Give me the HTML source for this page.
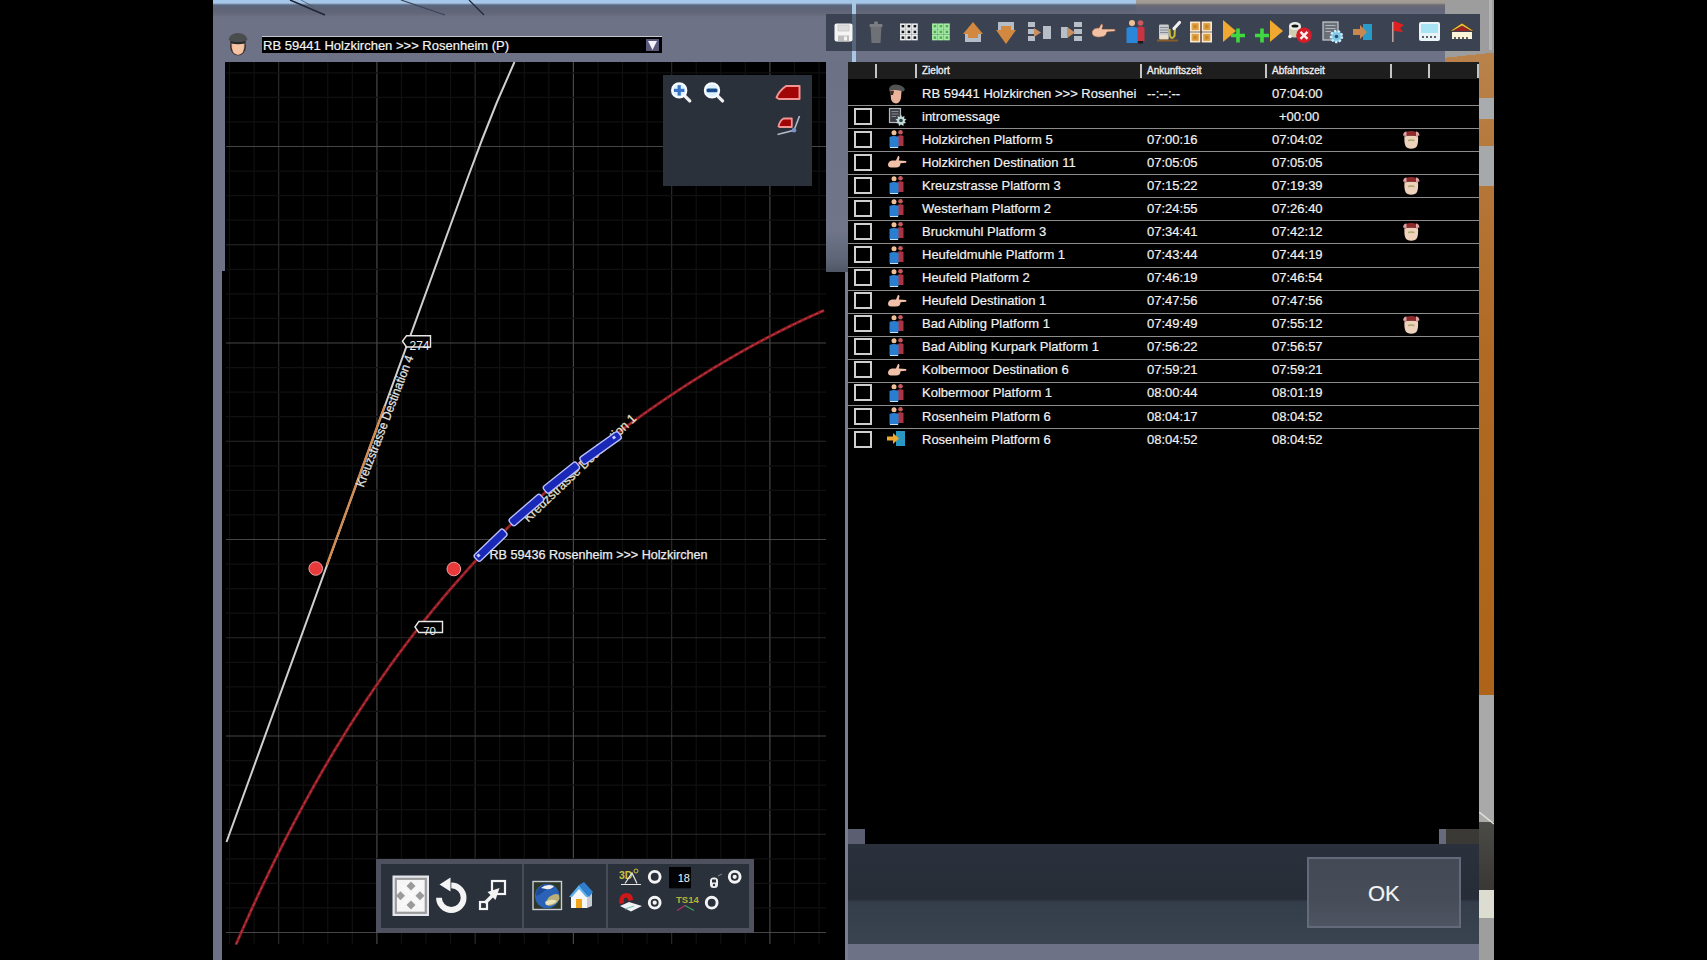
<!DOCTYPE html>
<html><head><meta charset="utf-8">
<style>
*{box-sizing:border-box}
html,body{margin:0;padding:0;background:#000;width:1707px;height:960px;overflow:hidden;font-family:"Liberation Sans",sans-serif}
.a{position:absolute}
.t{position:absolute;white-space:nowrap;color:#f2f2f2;font-size:13px;line-height:15px;-webkit-text-stroke:0.2px #f2f2f2}
.hs{position:absolute;top:64px;width:2px;height:14px;background:#c4c4c4}
.ht{position:absolute;top:65px;font-size:10px;line-height:11px;color:#ececec;white-space:nowrap;-webkit-text-stroke:0.35px #ececec}
.sep{position:absolute;left:848px;width:631px;height:1px;background:#8c8c8c}
.cb{position:absolute;left:854px;width:18px;height:17px;border:2px solid #cfcfcf}
</style></head>
<body>
<!-- scene -->
<div class="a" style="left:213px;top:0;width:1281px;height:960px;background:#6e7287"></div>
<div class="a" style="left:213px;top:0;width:1232px;height:17px;background:linear-gradient(#a2c6ea 0,#a8c8e8 3px,#5a6880 5px,#5e6376 9px,#646879 14px,#6e7287 17px)"></div>
<div class="a" style="left:1136px;top:0;width:309px;height:17px;background:linear-gradient(#a39d95 0,#a09a92 3px,#6c6c74 5px,#626678 9px,#666a7c 14px,#6e7287 17px)"></div>
<!-- right scenery strip -->
<div class="a" style="left:1445px;top:0;width:49px;height:53px;background:#9d9d9e"></div>
<div class="a" style="left:1489px;top:0;width:3px;height:53px;background:#b4b4b4"></div>
<div class="a" style="left:1479px;top:52px;width:15px;height:643px;background:linear-gradient(#b9834c 0,#b5773a 120px,#b06a24 300px,#ad6418 643px)"></div>
<div class="a" style="left:1445px;top:50px;width:49px;height:12px;background:linear-gradient(174deg,#9d9d9e 45%,#b8824a 45%)"></div>
<div class="a" style="left:1479px;top:98px;width:15px;height:21px;background:#a9acae"></div>
<div class="a" style="left:1479px;top:146px;width:15px;height:40px;background:#a6a8aa"></div>
<div class="a" style="left:1479px;top:695px;width:15px;height:127px;background:#a9a9a9"></div>
<div class="a" style="left:1479px;top:822px;width:15px;height:68px;background:linear-gradient(#4a4a46,#3a3834)"></div>
<svg class="a" style="left:1479px;top:812px" width="15" height="16"><path d="M0,0 L15,12" stroke="#e0e0d8" stroke-width="1.6"/></svg>
<div class="a" style="left:1479px;top:890px;width:15px;height:28px;background:#dcdcd0"></div>
<div class="a" style="left:1479px;top:918px;width:15px;height:42px;background:#9e9e9e"></div>
<!-- sky window strip -->
<div class="a" style="left:852px;top:0;width:4px;height:62px;background:#a9c8e6"></div>
<!-- wires -->
<svg class="a" style="left:213px;top:0" width="640" height="18"><g stroke="#1e2838" fill="none">
<path d="M77,0 L112,15" stroke-width="1.6"/><path d="M88,0 L101,7" stroke-width="0.8" stroke="#4a5a70"/>
<path d="M188,0 L232,15" stroke-width="1.2" stroke="#384458"/><path d="M256,0 L271,15" stroke-width="1.2"/>
</g></svg>
<!-- face icon -->
<svg class="a" style="left:226px;top:30px" width="24" height="27" viewBox="0 0 24 27">
  <ellipse cx="12" cy="16" rx="8" ry="9.5" fill="#3a2e28"/>
  <path d="M5.5,13 Q5,24 12,25 Q19,24 18.5,13 Z" fill="#f0b898"/>
  <path d="M7,14 Q12,12 17,14 L17,22 Q12,26 7,22 Z" fill="#f6c4a4"/>
  <path d="M2.5,10 Q4,3 12,3 Q20,3 21.5,10 Q18,12.5 12,12 Q6,12.5 2.5,10 Z" fill="#4a4d4e"/>
  <path d="M4,11 Q12,14 20,11 L19,13.5 Q12,15 5,13.5 Z" fill="#282828"/>
</svg>
<!-- dropdown -->
<div class="a" style="left:262px;top:36px;width:400px;height:1px;background:#c4c8d2"></div>
<div class="a" style="left:262px;top:37px;width:400px;height:16px;background:#000"></div>
<div class="t" style="left:263px;top:38px;font-size:13px;line-height:15px;color:#f4f4f4">RB 59441 Holzkirchen &gt;&gt;&gt; Rosenheim (P)</div>
<div class="a" style="left:646px;top:39px;width:13px;height:12px;background:#5b5a7c"></div>
<svg class="a" style="left:646px;top:39px" width="13" height="12"><path d="M2,2 L11,2 L6.5,11 Z" fill="#f4f2ff"/></svg>
<!-- map black -->
<div class="a" style="left:222px;top:62px;width:623px;height:898px;background:#000;clip-path:polygon(3px 0,100% 0,100% 100%,0 100%,0 209px,3px 209px)"></div>
<div class="a" style="left:826px;top:62px;width:22px;height:210px;background:linear-gradient(#6c7186 0,#70758a 80%,#5c6474 95%,#4e5664 100%)"></div>
<div class="a" style="left:845px;top:272px;width:3px;height:688px;background:#7a7e90"></div>
<svg class="a" style="left:0;top:0" width="1707" height="960" viewBox="0 0 1707 960">
<g>
<line x1="229.52" y1="62" x2="229.52" y2="944" stroke="#101010" stroke-width="1.2"/>
<line x1="254.09" y1="62" x2="254.09" y2="944" stroke="#101010" stroke-width="1.2"/>
<line x1="278.65" y1="62" x2="278.65" y2="944" stroke="#2a2a2a" stroke-width="1.2"/>
<line x1="303.21" y1="62" x2="303.21" y2="944" stroke="#101010" stroke-width="1.2"/>
<line x1="327.77" y1="62" x2="327.77" y2="944" stroke="#101010" stroke-width="1.2"/>
<line x1="352.34" y1="62" x2="352.34" y2="944" stroke="#101010" stroke-width="1.2"/>
<line x1="376.9" y1="62" x2="376.9" y2="944" stroke="#464646" stroke-width="1.2"/>
<line x1="401.46" y1="62" x2="401.46" y2="944" stroke="#101010" stroke-width="1.2"/>
<line x1="426.02" y1="62" x2="426.02" y2="944" stroke="#101010" stroke-width="1.2"/>
<line x1="450.59" y1="62" x2="450.59" y2="944" stroke="#101010" stroke-width="1.2"/>
<line x1="475.15" y1="62" x2="475.15" y2="944" stroke="#2a2a2a" stroke-width="1.2"/>
<line x1="499.71" y1="62" x2="499.71" y2="944" stroke="#101010" stroke-width="1.2"/>
<line x1="524.27" y1="62" x2="524.27" y2="944" stroke="#101010" stroke-width="1.2"/>
<line x1="548.84" y1="62" x2="548.84" y2="944" stroke="#101010" stroke-width="1.2"/>
<line x1="573.4" y1="62" x2="573.4" y2="944" stroke="#464646" stroke-width="1.2"/>
<line x1="597.96" y1="62" x2="597.96" y2="944" stroke="#101010" stroke-width="1.2"/>
<line x1="622.52" y1="62" x2="622.52" y2="944" stroke="#101010" stroke-width="1.2"/>
<line x1="647.09" y1="62" x2="647.09" y2="944" stroke="#101010" stroke-width="1.2"/>
<line x1="671.65" y1="62" x2="671.65" y2="944" stroke="#2a2a2a" stroke-width="1.2"/>
<line x1="696.21" y1="62" x2="696.21" y2="944" stroke="#101010" stroke-width="1.2"/>
<line x1="720.77" y1="62" x2="720.77" y2="944" stroke="#101010" stroke-width="1.2"/>
<line x1="745.34" y1="62" x2="745.34" y2="944" stroke="#101010" stroke-width="1.2"/>
<line x1="769.9" y1="62" x2="769.9" y2="944" stroke="#464646" stroke-width="1.2"/>
<line x1="794.46" y1="62" x2="794.46" y2="944" stroke="#101010" stroke-width="1.2"/>
<line x1="819.02" y1="62" x2="819.02" y2="944" stroke="#101010" stroke-width="1.2"/>
<line x1="226" y1="72.81" x2="826" y2="72.81" stroke="#101010" stroke-width="1.2"/>
<line x1="226" y1="97.38" x2="826" y2="97.38" stroke="#101010" stroke-width="1.2"/>
<line x1="226" y1="121.94" x2="826" y2="121.94" stroke="#101010" stroke-width="1.2"/>
<line x1="226" y1="146.5" x2="826" y2="146.5" stroke="#464646" stroke-width="1.2"/>
<line x1="226" y1="171.06" x2="826" y2="171.06" stroke="#101010" stroke-width="1.2"/>
<line x1="226" y1="195.62" x2="826" y2="195.62" stroke="#101010" stroke-width="1.2"/>
<line x1="226" y1="220.19" x2="826" y2="220.19" stroke="#101010" stroke-width="1.2"/>
<line x1="226" y1="244.75" x2="826" y2="244.75" stroke="#2a2a2a" stroke-width="1.2"/>
<line x1="226" y1="269.31" x2="826" y2="269.31" stroke="#101010" stroke-width="1.2"/>
<line x1="226" y1="293.88" x2="826" y2="293.88" stroke="#101010" stroke-width="1.2"/>
<line x1="226" y1="318.44" x2="826" y2="318.44" stroke="#101010" stroke-width="1.2"/>
<line x1="226" y1="343" x2="826" y2="343" stroke="#464646" stroke-width="1.2"/>
<line x1="226" y1="367.56" x2="826" y2="367.56" stroke="#101010" stroke-width="1.2"/>
<line x1="226" y1="392.12" x2="826" y2="392.12" stroke="#101010" stroke-width="1.2"/>
<line x1="226" y1="416.69" x2="826" y2="416.69" stroke="#101010" stroke-width="1.2"/>
<line x1="226" y1="441.25" x2="826" y2="441.25" stroke="#2a2a2a" stroke-width="1.2"/>
<line x1="226" y1="465.81" x2="826" y2="465.81" stroke="#101010" stroke-width="1.2"/>
<line x1="226" y1="490.38" x2="826" y2="490.38" stroke="#101010" stroke-width="1.2"/>
<line x1="226" y1="514.94" x2="826" y2="514.94" stroke="#101010" stroke-width="1.2"/>
<line x1="226" y1="539.5" x2="826" y2="539.5" stroke="#464646" stroke-width="1.2"/>
<line x1="226" y1="564.06" x2="826" y2="564.06" stroke="#101010" stroke-width="1.2"/>
<line x1="226" y1="588.62" x2="826" y2="588.62" stroke="#101010" stroke-width="1.2"/>
<line x1="226" y1="613.19" x2="826" y2="613.19" stroke="#101010" stroke-width="1.2"/>
<line x1="226" y1="637.75" x2="826" y2="637.75" stroke="#2a2a2a" stroke-width="1.2"/>
<line x1="226" y1="662.31" x2="826" y2="662.31" stroke="#101010" stroke-width="1.2"/>
<line x1="226" y1="686.88" x2="826" y2="686.88" stroke="#101010" stroke-width="1.2"/>
<line x1="226" y1="711.44" x2="826" y2="711.44" stroke="#101010" stroke-width="1.2"/>
<line x1="226" y1="736" x2="826" y2="736" stroke="#464646" stroke-width="1.2"/>
<line x1="226" y1="760.56" x2="826" y2="760.56" stroke="#101010" stroke-width="1.2"/>
<line x1="226" y1="785.12" x2="826" y2="785.12" stroke="#101010" stroke-width="1.2"/>
<line x1="226" y1="809.69" x2="826" y2="809.69" stroke="#101010" stroke-width="1.2"/>
<line x1="226" y1="834.25" x2="826" y2="834.25" stroke="#2a2a2a" stroke-width="1.2"/>
<line x1="226" y1="858.81" x2="826" y2="858.81" stroke="#101010" stroke-width="1.2"/>
<line x1="226" y1="883.38" x2="826" y2="883.38" stroke="#101010" stroke-width="1.2"/>
<line x1="226" y1="907.94" x2="826" y2="907.94" stroke="#101010" stroke-width="1.2"/>
<line x1="226" y1="932.5" x2="826" y2="932.5" stroke="#464646" stroke-width="1.2"/>
</g>
<!-- white track -->
<path d="M226.5,842 L468,177 Q482.2,138.2 497,102 L514.5,62" fill="none" stroke="#cfcfcf" stroke-width="2"/>
<line x1="384.7" y1="406" x2="326.8" y2="565" stroke="#d48a4c" stroke-width="2.2"/>
<!-- red track -->
<path d="M236,944.49 L238,939.88 L240,935.3 L242,930.75 L244,926.24 L246,921.75 L248,917.29 L250,912.87 L252,908.47 L254,904.1 L256,899.76 L258,895.46 L260,891.18 L262,886.92 L264,882.7 L266,878.51 L268,874.34 L270,870.2 L272,866.09 L274,862.01 L276,857.95 L278,853.92 L280,849.92 L282,845.94 L284,841.99 L286,838.07 L288,834.17 L290,830.3 L292,826.46 L294,822.64 L296,818.85 L298,815.08 L300,811.33 L302,807.62 L304,803.92 L306,800.25 L308,796.61 L310,792.98 L312,789.39 L314,785.81 L316,782.26 L318,778.74 L320,775.23 L322,771.75 L324,768.3 L326,764.86 L328,761.45 L330,758.06 L332,754.69 L334,751.35 L336,748.02 L338,744.72 L340,741.44 L342,738.18 L344,734.94 L346,731.72 L348,728.53 L350,725.35 L352,722.2 L354,719.06 L356,715.95 L358,712.85 L360,709.78 L362,706.72 L364,703.69 L366,700.67 L368,697.68 L370,694.7 L372,691.74 L374,688.8 L376,685.88 L378,682.98 L380,680.09 L382,677.23 L384,674.38 L386,671.55 L388,668.74 L390,665.94 L392,663.17 L394,660.41 L396,657.67 L398,654.94 L400,652.23 L402,649.54 L404,646.86 L406,644.21 L408,641.56 L410,638.94 L412,636.33 L414,633.73 L416,631.16 L418,628.59 L420,626.05 L422,623.52 L424,621 L426,618.5 L428,616.01 L430,613.54 L432,611.09 L434,608.64 L436,606.22 L438,603.81 L440,601.41 L442,599.02 L444,596.65 L446,594.3 L448,591.95 L450,589.63 L452,587.31 L454,585.01 L456,582.72 L458,580.45 L460,578.19 L462,575.94 L464,573.7 L466,571.48 L468,569.27 L470,567.07 L472,564.88 L474,562.71 L476,560.55 L478,558.4 L480,556.26 L482,554.14 L484,552.03 L486,549.93 L488,547.84 L490,545.76 L492,543.69 L494,541.64 L496,539.59 L498,537.56 L500,535.54 L502,533.53 L504,531.53 L506,529.54 L508,527.56 L510,525.59 L512,523.63 L514,521.68 L516,519.75 L518,517.82 L520,515.9 L522,514 L524,512.1 L526,510.21 L528,508.34 L530,506.47 L532,504.61 L534,502.76 L536,500.92 L538,499.09 L540,497.27 L542,495.46 L544,493.66 L546,491.87 L548,490.08 L550,488.31 L552,486.54 L554,484.79 L556,483.04 L558,481.3 L560,479.56 L562,477.84 L564,476.13 L566,474.42 L568,472.72 L570,471.03 L572,469.35 L574,467.68 L576,466.01 L578,464.36 L580,462.71 L582,461.06 L584,459.43 L586,457.8 L588,456.19 L590,454.57 L592,452.97 L594,451.37 L596,449.79 L598,448.21 L600,446.63 L602,445.07 L604,443.51 L606,441.95 L608,440.41 L610,438.87 L612,437.34 L614,435.82 L616,434.3 L618,432.79 L620,431.29 L622,429.79 L624,428.3 L626,426.82 L628,425.34 L630,423.87 L632,422.41 L634,420.96 L636,419.51 L638,418.06 L640,416.63 L642,415.2 L644,413.77 L646,412.36 L648,410.95 L650,409.54 L652,408.14 L654,406.75 L656,405.37 L658,403.99 L660,402.61 L662,401.25 L664,399.88 L666,398.53 L668,397.18 L670,395.84 L672,394.5 L674,393.17 L676,391.85 L678,390.53 L680,389.22 L682,387.91 L684,386.61 L686,385.31 L688,384.03 L690,382.74 L692,381.47 L694,380.19 L696,378.93 L698,377.67 L700,376.42 L702,375.17 L704,373.93 L706,372.69 L708,371.46 L710,370.24 L712,369.02 L714,367.81 L716,366.6 L718,365.4 L720,364.2 L722,363.02 L724,361.83 L726,360.66 L728,359.48 L730,358.32 L732,357.16 L734,356 L736,354.86 L738,353.71 L740,352.58 L742,351.45 L744,350.32 L746,349.2 L748,348.09 L750,346.99 L752,345.88 L754,344.79 L756,343.7 L758,342.62 L760,341.54 L762,340.47 L764,339.41 L766,338.35 L768,337.3 L770,336.25 L772,335.21 L774,334.18 L776,333.15 L778,332.13 L780,331.11 L782,330.1 L784,329.1 L786,328.11 L788,327.12 L790,326.13 L792,325.16 L794,324.19 L796,323.22 L798,322.27 L800,321.32 L802,320.37 L804,319.44 L806,318.5 L808,317.58 L810,316.66 L812,315.75 L814,314.85 L816,313.95 L818,313.07 L820,312.18 L822,311.31 L824,310.44" fill="none" stroke="#8e1a22" stroke-width="2.9"/>
<path d="M236,944.49 L238,939.88 L240,935.3 L242,930.75 L244,926.24 L246,921.75 L248,917.29 L250,912.87 L252,908.47 L254,904.1 L256,899.76 L258,895.46 L260,891.18 L262,886.92 L264,882.7 L266,878.51 L268,874.34 L270,870.2 L272,866.09 L274,862.01 L276,857.95 L278,853.92 L280,849.92 L282,845.94 L284,841.99 L286,838.07 L288,834.17 L290,830.3 L292,826.46 L294,822.64 L296,818.85 L298,815.08 L300,811.33 L302,807.62 L304,803.92 L306,800.25 L308,796.61 L310,792.98 L312,789.39 L314,785.81 L316,782.26 L318,778.74 L320,775.23 L322,771.75 L324,768.3 L326,764.86 L328,761.45 L330,758.06 L332,754.69 L334,751.35 L336,748.02 L338,744.72 L340,741.44 L342,738.18 L344,734.94 L346,731.72 L348,728.53 L350,725.35 L352,722.2 L354,719.06 L356,715.95 L358,712.85 L360,709.78 L362,706.72 L364,703.69 L366,700.67 L368,697.68 L370,694.7 L372,691.74 L374,688.8 L376,685.88 L378,682.98 L380,680.09 L382,677.23 L384,674.38 L386,671.55 L388,668.74 L390,665.94 L392,663.17 L394,660.41 L396,657.67 L398,654.94 L400,652.23 L402,649.54 L404,646.86 L406,644.21 L408,641.56 L410,638.94 L412,636.33 L414,633.73 L416,631.16 L418,628.59 L420,626.05 L422,623.52 L424,621 L426,618.5 L428,616.01 L430,613.54 L432,611.09 L434,608.64 L436,606.22 L438,603.81 L440,601.41 L442,599.02 L444,596.65 L446,594.3 L448,591.95 L450,589.63 L452,587.31 L454,585.01 L456,582.72 L458,580.45 L460,578.19 L462,575.94 L464,573.7 L466,571.48 L468,569.27 L470,567.07 L472,564.88 L474,562.71 L476,560.55 L478,558.4 L480,556.26 L482,554.14 L484,552.03 L486,549.93 L488,547.84 L490,545.76 L492,543.69 L494,541.64 L496,539.59 L498,537.56 L500,535.54 L502,533.53 L504,531.53 L506,529.54 L508,527.56 L510,525.59 L512,523.63 L514,521.68 L516,519.75 L518,517.82 L520,515.9 L522,514 L524,512.1 L526,510.21 L528,508.34 L530,506.47 L532,504.61 L534,502.76 L536,500.92 L538,499.09 L540,497.27 L542,495.46 L544,493.66 L546,491.87 L548,490.08 L550,488.31 L552,486.54 L554,484.79 L556,483.04 L558,481.3 L560,479.56 L562,477.84 L564,476.13 L566,474.42 L568,472.72 L570,471.03 L572,469.35 L574,467.68 L576,466.01 L578,464.36 L580,462.71 L582,461.06 L584,459.43 L586,457.8 L588,456.19 L590,454.57 L592,452.97 L594,451.37 L596,449.79 L598,448.21 L600,446.63 L602,445.07 L604,443.51 L606,441.95 L608,440.41 L610,438.87 L612,437.34 L614,435.82 L616,434.3 L618,432.79 L620,431.29 L622,429.79 L624,428.3 L626,426.82 L628,425.34 L630,423.87 L632,422.41 L634,420.96 L636,419.51 L638,418.06 L640,416.63 L642,415.2 L644,413.77 L646,412.36 L648,410.95 L650,409.54 L652,408.14 L654,406.75 L656,405.37 L658,403.99 L660,402.61 L662,401.25 L664,399.88 L666,398.53 L668,397.18 L670,395.84 L672,394.5 L674,393.17 L676,391.85 L678,390.53 L680,389.22 L682,387.91 L684,386.61 L686,385.31 L688,384.03 L690,382.74 L692,381.47 L694,380.19 L696,378.93 L698,377.67 L700,376.42 L702,375.17 L704,373.93 L706,372.69 L708,371.46 L710,370.24 L712,369.02 L714,367.81 L716,366.6 L718,365.4 L720,364.2 L722,363.02 L724,361.83 L726,360.66 L728,359.48 L730,358.32 L732,357.16 L734,356 L736,354.86 L738,353.71 L740,352.58 L742,351.45 L744,350.32 L746,349.2 L748,348.09 L750,346.99 L752,345.88 L754,344.79 L756,343.7 L758,342.62 L760,341.54 L762,340.47 L764,339.41 L766,338.35 L768,337.3 L770,336.25 L772,335.21 L774,334.18 L776,333.15 L778,332.13 L780,331.11 L782,330.1 L784,329.1 L786,328.11 L788,327.12 L790,326.13 L792,325.16 L794,324.19 L796,323.22 L798,322.27 L800,321.32 L802,320.37 L804,319.44 L806,318.5 L808,317.58 L810,316.66 L812,315.75 L814,314.85 L816,313.95 L818,313.07 L820,312.18 L822,311.31 L824,310.44" fill="none" stroke="#c84450" stroke-width="0.9" stroke-dasharray="4 2"/>
<!-- texts along tracks -->
<text x="0" y="0" transform="translate(363.5,488) rotate(-69)" font-family="Liberation Sans" font-size="12.5" fill="#e4e4e4" stroke="#e4e4e4" stroke-width="0.25" textLength="140" lengthAdjust="spacingAndGlyphs">Kreuzstrasse Destination 4</text>
<text x="0" y="0" transform="translate(528.3,522.8) rotate(-43.5)" font-family="Liberation Sans" font-size="13" fill="#e6e0c8" stroke="#e6e0c8" stroke-width="0.25" textLength="150" lengthAdjust="spacingAndGlyphs">Kreuzstrasse Destination 1</text>
<!-- train cars -->
<g fill="#1a28b8" stroke="#b8c0ff" stroke-width="1.4">
  <rect x="-20" y="-4.3" width="40" height="8.6" rx="2.5" transform="translate(490.6,545.2) rotate(-44)"/>
  <rect x="-20.5" y="-4.3" width="41" height="8.6" rx="2.5" transform="translate(526.4,510) rotate(-41)"/>
  <rect x="-21" y="-4.3" width="42" height="8.6" rx="2.5" transform="translate(561.4,477.6) rotate(-38.7)"/>
  <rect x="-23.5" y="-4.3" width="47" height="8.6" rx="2.5" transform="translate(600.6,448) rotate(-35.5)"/>
</g>
<g fill="#c8ccff">
  <rect x="-1.5" y="-1.5" width="3" height="3" transform="translate(478.5,555.5) rotate(-44)"/>
  <rect x="-1.5" y="-1.5" width="3" height="3" transform="translate(614,437.5) rotate(-35)"/>
</g>
<!-- train label -->
<text x="489.5" y="558.5" font-family="Liberation Sans" font-size="12" fill="#ececec" stroke="#ececec" stroke-width="0.25" textLength="218" lengthAdjust="spacingAndGlyphs">RB 59436 Rosenheim &gt;&gt;&gt; Holzkirchen</text>
<!-- red dots -->
<circle cx="315.7" cy="568.5" r="6.8" fill="#e83a3a" stroke="#f2a2a2" stroke-width="1"/>
<circle cx="453.8" cy="569" r="6.8" fill="#e83a3a" stroke="#f2a2a2" stroke-width="1"/>
<!-- tags -->
<path d="M402.5,341.2 L406.5,335.8 L430.5,335.8 L430.5,347 L406.5,347 Z" fill="#000" stroke="#e8e8e8" stroke-width="1.4"/>
<text x="409.5" y="349.5" font-family="Liberation Sans" font-size="12" fill="#f0f0f0">274</text>
<path d="M415,627 L418.8,621.5 L442.5,621.5 L442.5,632.5 L418.8,632.5 Z" fill="#000" stroke="#e8e8e8" stroke-width="1.4"/>
<text x="423.2" y="634.5" font-family="Liberation Sans" font-size="11.5" fill="#f0f0f0">70</text>
</svg>
<!-- map overlay panel -->
<div class="a" style="left:663px;top:75px;width:149px;height:111px;background:#2a313b"></div>
<svg class="a" style="left:663px;top:75px" width="149" height="111" viewBox="0 0 149 111">
  <!-- zoom in -->
  <g transform="translate(16.2,15.4)">
    <line x1="5" y1="5" x2="10.5" y2="10.5" stroke="#f0f0f0" stroke-width="3.4" stroke-linecap="round"/>
    <circle cx="0" cy="0" r="7.2" fill="#dcf2fc" stroke="#f8fcff" stroke-width="2"/>
    <rect x="-5.2" y="-1.6" width="10.4" height="3.2" fill="#3a74c8"/>
    <rect x="-1.6" y="-5.2" width="3.2" height="10.4" fill="#3a74c8"/>
  </g>
  <!-- zoom out -->
  <g transform="translate(49,15.4)">
    <line x1="5" y1="5" x2="10.5" y2="10.5" stroke="#f0f0f0" stroke-width="3.4" stroke-linecap="round"/>
    <circle cx="0" cy="0" r="7.2" fill="#dcf2fc" stroke="#f8fcff" stroke-width="2"/>
    <rect x="-5.5" y="-1.8" width="11" height="3.6" rx="1.5" fill="#1c4c8c"/>
  </g>
  <!-- red train shape -->
  <path d="M113.5,22.5 Q116,16 123,11 L136.5,11 L136.5,24 L116,24 Z" fill="#a00606" stroke="#f09494" stroke-width="2" stroke-linejoin="round"/>
  <path d="M115.5,51.5 Q116.5,46 120.5,43.5 L128.8,43.5 L128.8,52 L116.5,52 Z" fill="#a00606" stroke="#f09494" stroke-width="1.8" stroke-linejoin="round"/>
  <path d="M114.5,59.5 L131,55.3 L136.5,41" fill="none" stroke="#b0b8c8" stroke-width="1.6"/>
  <circle cx="131" cy="55.3" r="2.3" fill="#7a94c8"/>
</svg>
<!-- bottom toolbar -->
<div class="a" style="left:376px;top:859px;width:378px;height:74px;background:#4f525e"></div>
<div class="a" style="left:381px;top:864px;width:368px;height:64px;background:#2a313b"></div>
<div class="a" style="left:522px;top:864px;width:2px;height:64px;background:#474c58"></div>
<div class="a" style="left:606px;top:864px;width:2px;height:64px;background:#474c58"></div>
<svg class="a" style="left:376px;top:859px" width="378" height="74" viewBox="0 0 378 74">
  <!-- fit frame -->
  <rect x="17.5" y="17.5" width="34.5" height="38.5" fill="#f6f6f6" stroke="#e4e8ee" stroke-width="2"/>
  <rect x="19.8" y="19.8" width="30" height="34" fill="none" stroke="#9c9c9c" stroke-width="2.2"/>
  <path d="M25,25 L45,48 M45,25 L25,48" stroke="#ffffff" stroke-width="1"/>
  <g fill="#9a9a9a">
    <rect x="-3.2" y="-3.2" width="6.4" height="6.4" transform="translate(35,27) rotate(45)"/>
    <rect x="-3.2" y="-3.2" width="6.4" height="6.4" transform="translate(35,46) rotate(45)"/>
    <rect x="-3.2" y="-3.2" width="6.4" height="6.4" transform="translate(24.5,36.7) rotate(45)"/>
    <rect x="-3.2" y="-3.2" width="6.4" height="6.4" transform="translate(44,36.7) rotate(45)"/>
  </g>
  <!-- rotate -->
  <path d="M63,38.7 A12.3,12.3 0 1 0 75.3,26.4" fill="none" stroke="#f4f4f4" stroke-width="5.8"/>
  <path d="M63.5,25.5 L74.5,18.5 L74.5,32.5 Z" fill="#f4f4f4"/>
  <!-- expand -->
  <rect x="116" y="22" width="13" height="13" fill="#2a313b" stroke="#f4f4f4" stroke-width="2.2"/>
  <rect x="104" y="43" width="7" height="7" fill="#2a313b" stroke="#f4f4f4" stroke-width="2.2"/>
  <path d="M109,44 L117,36" stroke="#f4f4f4" stroke-width="3.4"/>
  <path d="M123.5,29 L111.5,33 L119.5,41 Z" fill="#f4f4f4"/>
  <!-- globe -->
  <rect x="157" y="22.5" width="28.5" height="28" fill="#2e3628" stroke="#c8ccd4" stroke-width="1.4"/>
  <circle cx="171.2" cy="37" r="12.3" fill="#2a62b8"/>
  <path d="M160,37 Q160,27 171,25 Q176,26 177,30 Q171,29 168,32 Q164,36 160,37 Z" fill="#1c4a98"/>
  <path d="M165,29 Q170,24.5 178,27 Q175,31 170,30 Z" fill="#f0f0f0"/>
  <path d="M173,38 Q180,33 183,36 L183.5,40 Q180,47 172,47 Q168,44 173,38 Z" fill="#b8b078"/>
  <path d="M169,43 Q175,39 181,42 Q177,46 170,46 Z" fill="#e8e4b8"/>
  <!-- house -->
  <path d="M195,37 L203,28 L211,37 L211,49 L195,49 Z" fill="#f6f6f6"/>
  <path d="M211,37 L216,33 L216,47 L211,49 Z" fill="#c8ccd0"/>
  <path d="M193,38 L203,26 L213,38 L210,38 L203,30 L196,38 Z" fill="#5ab0ee"/>
  <path d="M203,26 L208,23 L217,33 L213,38 Z" fill="#2f7fd0"/>
  <rect x="200" y="40" width="6" height="9" fill="#f0a418"/>
  <!-- 3D -->
  <text x="243" y="19.5" font-family="Liberation Sans" font-size="10.5" fill="#c8c040" font-weight="bold">3D</text>
  <circle cx="260" cy="12" r="2" fill="none" stroke="#c8c040" stroke-width="1"/>
  <path d="M249,24.5 L256,14 L261,24.5 M245,25.5 L265,25.5" stroke="#e8e8e8" stroke-width="1.2" fill="none"/>
  <!-- radios -->
  <g fill="none" stroke="#f4f4f4" stroke-width="2.9">
    <circle cx="278.7" cy="17.8" r="5.4"/>
    <circle cx="278.7" cy="43.7" r="5.4"/>
    <circle cx="358.7" cy="17.8" r="5.4"/>
    <circle cx="335.7" cy="43.7" r="5.4"/>
  </g>
  <circle cx="278.7" cy="43.7" r="2.1" fill="#f4f4f4"/>
  <circle cx="358.7" cy="17.8" r="2.1" fill="#f4f4f4"/>
  <!-- 18 box -->
  <rect x="293" y="8" width="22" height="21.3" fill="#030305"/>
  <text x="314" y="22.5" font-family="Liberation Sans" font-size="11" fill="#f4f4f4" text-anchor="end">18</text>
  <!-- lock -->
  <rect x="334" y="18.5" width="8" height="10.5" rx="3.5" fill="#f0f0f0"/>
  <rect x="336" y="20.5" width="4" height="3" fill="#2a313b"/>
  <circle cx="338" cy="26" r="1.2" fill="#2a313b"/>
  <path d="M342,17 L346,15" stroke="#a0a4a8" stroke-width="0.8"/>
  <!-- magnet -->
  <path d="M243.5,45 Q242,35 250,34 Q257,34 257,41 L252.5,42 Q252,38 249.5,38.5 Q247,39 248,44 Z" fill="#d01818"/>
  <path d="M244,47 L253,43 L266,47 L255,52.5 Z" fill="#f2f2f6"/>
  <path d="M249,50 L258,47" stroke="#7ac8b8" stroke-width="1.2"/>
  <!-- TS14 -->
  <text x="300" y="44" font-family="Liberation Sans" font-size="9.5" font-weight="bold" fill="#b8b038">TS14</text>
  <path d="M301,51.5 L309,46.5" stroke="#b03070" stroke-width="1.2"/>
  <path d="M309,46.5 L318,51.5" stroke="#38a050" stroke-width="1.4"/>
</svg>
<!-- toolbar -->
<div class="a" style="left:826px;top:14px;width:654px;height:37px;background:#3b4352"></div>
<div class="a" style="left:852px;top:14px;width:4px;height:37px;background:#56667a"></div>
<svg class="a" style="left:826px;top:14px" width="654" height="37" viewBox="826 14 654 37">
  <!-- floppy 843 -->
  <rect x="834.5" y="23.5" width="18" height="18" rx="2" fill="#f4f4f4"/>
  <rect x="838" y="25" width="11" height="6" fill="#dcdcdc" stroke="#c8c8c8" stroke-width="0.8"/>
  <rect x="838" y="35.5" width="11" height="6" fill="#bdbdbd"/>
  <rect x="844" y="36.5" width="3" height="4" fill="#f4f4f4"/>
  <!-- trash 876 -->
  <path d="M870.5,26 L881.5,26 L880.5,43 L871.5,43 Z" fill="#6e7276"/>
  <rect x="869.5" y="24" width="13" height="3" rx="1" fill="#7a7e82"/>
  <rect x="874" y="21.5" width="4" height="3" rx="1" fill="#7a7e82"/>
  <!-- grids 908 / 941 -->
  <g fill="#151a20" stroke="#f2f2f2" stroke-width="1.5"><rect x="900.8" y="24.2" width="4.2" height="4" /><rect x="900.8" y="29.9" width="4.2" height="4" /><rect x="900.8" y="35.6" width="4.2" height="4" /><rect x="906.8" y="24.2" width="4.2" height="4" /><rect x="906.8" y="29.9" width="4.2" height="4" /><rect x="906.8" y="35.6" width="4.2" height="4" /><rect x="912.8" y="24.2" width="4.2" height="4" /><rect x="912.8" y="29.9" width="4.2" height="4" /><rect x="912.8" y="35.6" width="4.2" height="4" /></g>
  <g fill="#58a858" stroke="#a8f0a8" stroke-width="1.5"><rect x="932.8" y="24.2" width="4.2" height="4" /><rect x="932.8" y="29.9" width="4.2" height="4" /><rect x="932.8" y="35.6" width="4.2" height="4" /><rect x="938.8" y="24.2" width="4.2" height="4" /><rect x="938.8" y="29.9" width="4.2" height="4" /><rect x="938.8" y="35.6" width="4.2" height="4" /><rect x="944.8" y="24.2" width="4.2" height="4" /><rect x="944.8" y="29.9" width="4.2" height="4" /><rect x="944.8" y="35.6" width="4.2" height="4" /></g>
  <!-- up arrow 973 -->
  <rect x="965" y="33" width="16" height="9" fill="#b4bcc8"/>
  <path d="M963,34 L973,22 L983,34 L978,34 L978,38 L968,38 L968,34 Z" fill="#d2883e"/>
  <!-- down arrow 1006 -->
  <rect x="998" y="22" width="16" height="8" fill="#b4bcc8"/>
  <path d="M996,30 L1006,44 L1016,30 L1011,30 L1011,26 L1001,26 L1001,30 Z" fill="#d2883e"/>
  <!-- merge 1038 -->
  <g fill="#b8bec8"><rect x="1028" y="22" width="7" height="5"/><rect x="1028" y="29" width="7" height="5"/><rect x="1028" y="36" width="7" height="5"/><rect x="1043" y="26" width="8" height="13"/></g>
  <path d="M1034,28 L1041,32.5 L1034,37 Z" fill="#c89060"/>
  <!-- split 1071 -->
  <g fill="#b8bec8"><rect x="1074" y="22" width="8" height="5"/><rect x="1074" y="29" width="8" height="5"/><rect x="1074" y="36" width="8" height="5"/><rect x="1061" y="27" width="7" height="11"/></g>
  <path d="M1067,27 L1075,32.5 L1067,38 Z" fill="#c89060"/>
  <!-- hand 1103 -->
  <path d="M1092,31 Q1095,27 1099,28 L1101,24 Q1103,23 1103,26 L1102,29 L1115,29 Q1116,31 1114,31.5 L1107,32 Q1106,37 1101,37 Q1094,38 1092,34 Z" fill="#f4c0a4" stroke="#5a3a30" stroke-width="0.6"/>
  <!-- people 1136 -->
  <circle cx="1140.5" cy="23" r="2.8" fill="#c85a60"/>
  <path d="M1136.5,27.5 Q1140.5,25.5 1144.5,27.5 L1144.5,41 L1137,41 Z" fill="#c83440"/>
  <rect x="1138" y="41" width="5" height="2.5" fill="#1a1a1a"/>
  <circle cx="1132" cy="23" r="3" fill="#f0c098"/>
  <path d="M1126.5,28 Q1132,25.5 1137.5,28 L1137.5,43 L1126.5,43 Z" fill="#2a86d8"/>
  <!-- pump 1168 -->
  <rect x="1159" y="24.5" width="9.8" height="15" rx="1" fill="#c8ccd0"/>
  <path d="M1160,27.5 H1168 M1160,30 H1168 M1160,32.5 H1168" stroke="#80848a" stroke-width="0.9"/>
  <rect x="1160" y="35" width="8" height="4.5" fill="#e8e0cc"/>
  <path d="M1169.5,29 L1170,36 Q1172,40 1174.5,36 L1175,28" stroke="#c8b838" stroke-width="2" fill="none"/>
  <path d="M1174,28.5 L1179.5,22.5" stroke="#f0f0f0" stroke-width="3.2" stroke-linecap="round"/>
  <rect x="1157" y="39.5" width="21" height="2" fill="#8a5a28"/>
  <!-- 4 squares 1201 -->
  <rect x="1190" y="21.5" width="22" height="21" fill="#3a1410"/>
  <g fill="#e0a040" stroke="#f4ecd8" stroke-width="1.6"><rect x="1190.8" y="22.3" width="8.8" height="8.6"/><rect x="1202.4" y="22.3" width="8.8" height="8.6"/><rect x="1190.8" y="33.1" width="8.8" height="8.6"/><rect x="1202.4" y="33.1" width="8.8" height="8.6"/></g>
  <circle cx="1195.2" cy="26.6" r="2" fill="#c88830"/><circle cx="1206.8" cy="26.6" r="2" fill="#c88830"/><circle cx="1195.2" cy="37.4" r="2" fill="#c88830"/><circle cx="1206.8" cy="37.4" r="2" fill="#c88830"/>
  <!-- play+ 1233 -->
  <path d="M1223,20 L1236,31 L1223,42 Z" fill="#f0a830"/>
  <path d="M1231,35.5 L1245,35.5 M1238,28.5 L1238,42.5" stroke="#40d840" stroke-width="3.6"/>
  <!-- +play 1266 -->
  <path d="M1270,20 L1283,31 L1270,42 Z" fill="#f0a830"/>
  <path d="M1255,35.5 L1269,35.5 M1262,28.5 L1262,42.5" stroke="#40d840" stroke-width="3.6"/>
  <!-- stop x 1299 -->
  <path d="M1289,26 L1289,36 Q1295,39 1301,36 L1301,26 Z" fill="#d0d0b0"/>
  <ellipse cx="1295" cy="26" rx="6" ry="4" fill="#e8ece8"/>
  <ellipse cx="1295" cy="26" rx="3.5" ry="1.6" fill="#101010"/>
  <circle cx="1290" cy="36.5" r="1.8" fill="#f4f4f4"/>
  <circle cx="1304" cy="35.3" r="7.8" fill="#d41e2a"/>
  <path d="M1300.5,31.8 L1307.5,38.8 M1307.5,31.8 L1300.5,38.8" stroke="#fff0f0" stroke-width="2.4"/>
  <!-- doc gear 1332 -->
  <rect x="1323" y="22" width="15" height="18" fill="#6a7078" stroke="#c8ccd0" stroke-width="1.2"/><path d="M1325.5,25.5 H1335.5 M1325.5,28.5 H1335.5 M1325.5,31.5 H1331" stroke="#b0b4b8" stroke-width="1"/>
  <circle cx="1336.5" cy="36.5" r="5.5" fill="#80c8e8" stroke="#d0f0ff" stroke-width="2.4" stroke-dasharray="2.2 1.6"/><circle cx="1336.5" cy="36.5" r="1.8" fill="#2a5070"/>
  <!-- arrow door 1364 -->
  <rect x="1363" y="24" width="9" height="16" fill="#2a9ac8"/>
  <path d="M1353,29 L1360,29 L1360,25 L1367,32 L1360,39 L1360,35 L1353,35 Z" fill="#c88850"/>
  <!-- flag 1397 -->
  <rect x="1392" y="22" width="1.6" height="20" fill="#b8a0a0"/>
  <path d="M1394,21 L1404,25 L1400,28 L1403,32 L1394,31 Z" fill="#e02020"/>
  <!-- screen 1429 -->
  <rect x="1419" y="22" width="21" height="19" rx="2" fill="#e8f4f8"/>
  <rect x="1421" y="24" width="17" height="9" fill="#a8e4f4"/>
  <g fill="#303030"><circle cx="1423" cy="37" r="1"/><circle cx="1427" cy="37" r="1"/><circle cx="1431" cy="37" r="1"/><circle cx="1435" cy="37" r="1"/></g>
  <!-- station 1462 -->
  <path d="M1450,31 L1462,23 L1474,31 L1471,31 L1462,26 L1453,31 Z" fill="#e8c040" stroke="#402008" stroke-width="0.6"/>
  <path d="M1454,31 L1462,26 L1470,31 Z" fill="#a02020"/>
  <rect x="1452" y="32" width="20" height="7" fill="#fcf4d8"/>
  <g fill="#303030"><circle cx="1455" cy="38" r="1"/><circle cx="1459" cy="38" r="1"/><circle cx="1463" cy="38" r="1"/><circle cx="1467" cy="38" r="1"/></g>
</svg>
<!-- table -->
<div class="a" style="left:848px;top:62px;width:631px;height:782px;background:#000"></div>
<div class="a" style="left:848px;top:62px;width:631px;height:17px;background:#1e1e1e"></div>
<div class="hs" style="left:875px"></div>
<div class="hs" style="left:915px"></div>
<div class="hs" style="left:1140px"></div>
<div class="hs" style="left:1265px"></div>
<div class="hs" style="left:1390px"></div>
<div class="hs" style="left:1428px"></div>
<div class="hs" style="left:1477px"></div>
<div class="ht" style="left:922px">Zielort</div>
<div class="ht" style="left:1147px">Ankunftszeit</div>
<div class="ht" style="left:1272px">Abfahrtszeit</div>
<svg class="a" style="left:884px;top:82.0px" width="24" height="22" viewBox="0 0 24 22"><path d="M5,7 Q6,2.5 12,2.5 Q19,3 21,7.5 L19.5,9.5 Q12,8 5.5,9.5 Z" fill="#505454"/><path d="M6.5,8.5 Q12,7.5 17.5,9 L17,16 Q16,21 12,21.5 Q8,21 7,17 Z" fill="#eab49c"/><path d="M6.5,9 Q9,8.5 10,9 L9,13 L7,13 Z" fill="#3a2a24"/></svg>
<div class="t" style="left:922px;top:85.5px">RB 59441 Holzkirchen &gt;&gt;&gt; Rosenhei</div>
<div class="t" style="left:1147px;top:85.5px">--:--:--</div>
<div class="t" style="left:1272px;top:85.5px">07:04:00</div>
<div class="sep" style="top:105.0px"></div>
<div class="cb" style="top:107.6px"></div>
<svg class="a" style="left:884px;top:105.1px" width="24" height="22" viewBox="0 0 24 22"><rect x="5.5" y="3.5" width="11" height="14" fill="#3c4044" stroke="#b4b8bc" stroke-width="1.2"/><path d="M7.5,6.5 H14.5 M7.5,9 H14.5 M7.5,11.5 H12" stroke="#90949a" stroke-width="0.9"/><path d="M17,9.5 L18,12 L20.5,11 L20,13.5 L22.5,14.5 L20.5,16 L22,18 L19.5,18.5 L19.5,21 L17,19.5 L15,21 L14.5,18.5 L12,18 L13.5,16 L11.5,14.5 L14,13.5 L13.5,11 L16,12 Z" fill="#c4dcdc"/><circle cx="17" cy="15.5" r="1.8" fill="#304040"/></svg>
<div class="t" style="left:922px;top:108.6px">intromessage</div>
<div class="t" style="left:1279px;top:108.6px">+00:00</div>
<div class="sep" style="top:128.1px"></div>
<div class="cb" style="top:130.6px"></div>
<svg class="a" style="left:884px;top:128.1px" width="24" height="22" viewBox="0 0 24 22"><circle cx="16.5" cy="4.3" r="2.3" fill="#c85a60"/><path d="M13.5,8 Q16.5,6.5 19.5,8 L19.5,18 L14,18 Z" fill="#a83444"/><circle cx="10" cy="4.8" r="2.5" fill="#f0c098"/><path d="M5.5,9 Q10,7 14.5,9 L14.5,19.5 L5.5,19.5 Z" fill="#2a7ed0"/><path d="M6,19.5 H14" stroke="#c8e0f0" stroke-width="1"/></svg>
<div class="t" style="left:922px;top:131.6px">Holzkirchen Platform 5</div>
<div class="t" style="left:1147px;top:131.6px">07:00:16</div>
<div class="t" style="left:1272px;top:131.6px">07:04:02</div>
<svg class="a" style="left:1402px;top:129.1px" width="18" height="20" viewBox="0 0 18 20"><path d="M2.5,6.5 Q2,14 3.5,17 Q5,19.8 9.2,19.8 Q13.5,19.8 15,17 Q16.5,14 16,6.5 Z" fill="#efd2bc"/><path d="M4,3 Q9.2,0.8 14.5,3 L15.5,7.5 Q9.2,5.5 3,7.5 Z" fill="#8e2a2a"/><path d="M1,6.5 Q1.5,2.5 4.5,2.5 L4.5,7 Z M17.5,6.5 Q17,2.5 14,2.5 L14,7 Z" fill="#e0a4a8"/><path d="M6,11.5 Q9.2,10.5 12.5,11.5" stroke="#a8a870" stroke-width="1.5" fill="none"/></svg>
<div class="sep" style="top:151.1px"></div>
<div class="cb" style="top:153.7px"></div>
<svg class="a" style="left:884px;top:151.2px" width="24" height="22" viewBox="0 0 24 22"><path d="M4,13.5 Q4.5,10 8,9.5 L12,9.5 L14,5 Q15.5,4.5 15.5,6.5 L14.8,9.6 L22,10 Q23,11 22,11.8 L16.5,12.3 Q16.5,16.5 12,16.5 L7,16.5 Q4,16.5 4,13.5 Z" fill="#f0c0a8"/></svg>
<div class="t" style="left:922px;top:154.7px">Holzkirchen Destination 11</div>
<div class="t" style="left:1147px;top:154.7px">07:05:05</div>
<div class="t" style="left:1272px;top:154.7px">07:05:05</div>
<div class="sep" style="top:174.2px"></div>
<div class="cb" style="top:176.8px"></div>
<svg class="a" style="left:884px;top:174.3px" width="24" height="22" viewBox="0 0 24 22"><circle cx="16.5" cy="4.3" r="2.3" fill="#c85a60"/><path d="M13.5,8 Q16.5,6.5 19.5,8 L19.5,18 L14,18 Z" fill="#a83444"/><circle cx="10" cy="4.8" r="2.5" fill="#f0c098"/><path d="M5.5,9 Q10,7 14.5,9 L14.5,19.5 L5.5,19.5 Z" fill="#2a7ed0"/><path d="M6,19.5 H14" stroke="#c8e0f0" stroke-width="1"/></svg>
<div class="t" style="left:922px;top:177.8px">Kreuzstrasse Platform 3</div>
<div class="t" style="left:1147px;top:177.8px">07:15:22</div>
<div class="t" style="left:1272px;top:177.8px">07:19:39</div>
<svg class="a" style="left:1402px;top:175.3px" width="18" height="20" viewBox="0 0 18 20"><path d="M2.5,6.5 Q2,14 3.5,17 Q5,19.8 9.2,19.8 Q13.5,19.8 15,17 Q16.5,14 16,6.5 Z" fill="#efd2bc"/><path d="M4,3 Q9.2,0.8 14.5,3 L15.5,7.5 Q9.2,5.5 3,7.5 Z" fill="#8e2a2a"/><path d="M1,6.5 Q1.5,2.5 4.5,2.5 L4.5,7 Z M17.5,6.5 Q17,2.5 14,2.5 L14,7 Z" fill="#e0a4a8"/><path d="M6,11.5 Q9.2,10.5 12.5,11.5" stroke="#a8a870" stroke-width="1.5" fill="none"/></svg>
<div class="sep" style="top:197.3px"></div>
<div class="cb" style="top:199.8px"></div>
<svg class="a" style="left:884px;top:197.3px" width="24" height="22" viewBox="0 0 24 22"><circle cx="16.5" cy="4.3" r="2.3" fill="#c85a60"/><path d="M13.5,8 Q16.5,6.5 19.5,8 L19.5,18 L14,18 Z" fill="#a83444"/><circle cx="10" cy="4.8" r="2.5" fill="#f0c098"/><path d="M5.5,9 Q10,7 14.5,9 L14.5,19.5 L5.5,19.5 Z" fill="#2a7ed0"/><path d="M6,19.5 H14" stroke="#c8e0f0" stroke-width="1"/></svg>
<div class="t" style="left:922px;top:200.8px">Westerham Platform 2</div>
<div class="t" style="left:1147px;top:200.8px">07:24:55</div>
<div class="t" style="left:1272px;top:200.8px">07:26:40</div>
<div class="sep" style="top:220.3px"></div>
<div class="cb" style="top:222.9px"></div>
<svg class="a" style="left:884px;top:220.4px" width="24" height="22" viewBox="0 0 24 22"><circle cx="16.5" cy="4.3" r="2.3" fill="#c85a60"/><path d="M13.5,8 Q16.5,6.5 19.5,8 L19.5,18 L14,18 Z" fill="#a83444"/><circle cx="10" cy="4.8" r="2.5" fill="#f0c098"/><path d="M5.5,9 Q10,7 14.5,9 L14.5,19.5 L5.5,19.5 Z" fill="#2a7ed0"/><path d="M6,19.5 H14" stroke="#c8e0f0" stroke-width="1"/></svg>
<div class="t" style="left:922px;top:223.9px">Bruckmuhl Platform 3</div>
<div class="t" style="left:1147px;top:223.9px">07:34:41</div>
<div class="t" style="left:1272px;top:223.9px">07:42:12</div>
<svg class="a" style="left:1402px;top:221.4px" width="18" height="20" viewBox="0 0 18 20"><path d="M2.5,6.5 Q2,14 3.5,17 Q5,19.8 9.2,19.8 Q13.5,19.8 15,17 Q16.5,14 16,6.5 Z" fill="#efd2bc"/><path d="M4,3 Q9.2,0.8 14.5,3 L15.5,7.5 Q9.2,5.5 3,7.5 Z" fill="#8e2a2a"/><path d="M1,6.5 Q1.5,2.5 4.5,2.5 L4.5,7 Z M17.5,6.5 Q17,2.5 14,2.5 L14,7 Z" fill="#e0a4a8"/><path d="M6,11.5 Q9.2,10.5 12.5,11.5" stroke="#a8a870" stroke-width="1.5" fill="none"/></svg>
<div class="sep" style="top:243.4px"></div>
<div class="cb" style="top:246.0px"></div>
<svg class="a" style="left:884px;top:243.5px" width="24" height="22" viewBox="0 0 24 22"><circle cx="16.5" cy="4.3" r="2.3" fill="#c85a60"/><path d="M13.5,8 Q16.5,6.5 19.5,8 L19.5,18 L14,18 Z" fill="#a83444"/><circle cx="10" cy="4.8" r="2.5" fill="#f0c098"/><path d="M5.5,9 Q10,7 14.5,9 L14.5,19.5 L5.5,19.5 Z" fill="#2a7ed0"/><path d="M6,19.5 H14" stroke="#c8e0f0" stroke-width="1"/></svg>
<div class="t" style="left:922px;top:247.0px">Heufeldmuhle Platform 1</div>
<div class="t" style="left:1147px;top:247.0px">07:43:44</div>
<div class="t" style="left:1272px;top:247.0px">07:44:19</div>
<div class="sep" style="top:266.5px"></div>
<div class="cb" style="top:269.1px"></div>
<svg class="a" style="left:884px;top:266.6px" width="24" height="22" viewBox="0 0 24 22"><circle cx="16.5" cy="4.3" r="2.3" fill="#c85a60"/><path d="M13.5,8 Q16.5,6.5 19.5,8 L19.5,18 L14,18 Z" fill="#a83444"/><circle cx="10" cy="4.8" r="2.5" fill="#f0c098"/><path d="M5.5,9 Q10,7 14.5,9 L14.5,19.5 L5.5,19.5 Z" fill="#2a7ed0"/><path d="M6,19.5 H14" stroke="#c8e0f0" stroke-width="1"/></svg>
<div class="t" style="left:922px;top:270.1px">Heufeld Platform 2</div>
<div class="t" style="left:1147px;top:270.1px">07:46:19</div>
<div class="t" style="left:1272px;top:270.1px">07:46:54</div>
<div class="sep" style="top:289.6px"></div>
<div class="cb" style="top:292.1px"></div>
<svg class="a" style="left:884px;top:289.6px" width="24" height="22" viewBox="0 0 24 22"><path d="M4,13.5 Q4.5,10 8,9.5 L12,9.5 L14,5 Q15.5,4.5 15.5,6.5 L14.8,9.6 L22,10 Q23,11 22,11.8 L16.5,12.3 Q16.5,16.5 12,16.5 L7,16.5 Q4,16.5 4,13.5 Z" fill="#f0c0a8"/></svg>
<div class="t" style="left:922px;top:293.1px">Heufeld Destination 1</div>
<div class="t" style="left:1147px;top:293.1px">07:47:56</div>
<div class="t" style="left:1272px;top:293.1px">07:47:56</div>
<div class="sep" style="top:312.6px"></div>
<div class="cb" style="top:315.2px"></div>
<svg class="a" style="left:884px;top:312.7px" width="24" height="22" viewBox="0 0 24 22"><circle cx="16.5" cy="4.3" r="2.3" fill="#c85a60"/><path d="M13.5,8 Q16.5,6.5 19.5,8 L19.5,18 L14,18 Z" fill="#a83444"/><circle cx="10" cy="4.8" r="2.5" fill="#f0c098"/><path d="M5.5,9 Q10,7 14.5,9 L14.5,19.5 L5.5,19.5 Z" fill="#2a7ed0"/><path d="M6,19.5 H14" stroke="#c8e0f0" stroke-width="1"/></svg>
<div class="t" style="left:922px;top:316.2px">Bad Aibling Platform 1</div>
<div class="t" style="left:1147px;top:316.2px">07:49:49</div>
<div class="t" style="left:1272px;top:316.2px">07:55:12</div>
<svg class="a" style="left:1402px;top:313.7px" width="18" height="20" viewBox="0 0 18 20"><path d="M2.5,6.5 Q2,14 3.5,17 Q5,19.8 9.2,19.8 Q13.5,19.8 15,17 Q16.5,14 16,6.5 Z" fill="#efd2bc"/><path d="M4,3 Q9.2,0.8 14.5,3 L15.5,7.5 Q9.2,5.5 3,7.5 Z" fill="#8e2a2a"/><path d="M1,6.5 Q1.5,2.5 4.5,2.5 L4.5,7 Z M17.5,6.5 Q17,2.5 14,2.5 L14,7 Z" fill="#e0a4a8"/><path d="M6,11.5 Q9.2,10.5 12.5,11.5" stroke="#a8a870" stroke-width="1.5" fill="none"/></svg>
<div class="sep" style="top:335.7px"></div>
<div class="cb" style="top:338.3px"></div>
<svg class="a" style="left:884px;top:335.8px" width="24" height="22" viewBox="0 0 24 22"><circle cx="16.5" cy="4.3" r="2.3" fill="#c85a60"/><path d="M13.5,8 Q16.5,6.5 19.5,8 L19.5,18 L14,18 Z" fill="#a83444"/><circle cx="10" cy="4.8" r="2.5" fill="#f0c098"/><path d="M5.5,9 Q10,7 14.5,9 L14.5,19.5 L5.5,19.5 Z" fill="#2a7ed0"/><path d="M6,19.5 H14" stroke="#c8e0f0" stroke-width="1"/></svg>
<div class="t" style="left:922px;top:339.3px">Bad Aibling Kurpark Platform 1</div>
<div class="t" style="left:1147px;top:339.3px">07:56:22</div>
<div class="t" style="left:1272px;top:339.3px">07:56:57</div>
<div class="sep" style="top:358.8px"></div>
<div class="cb" style="top:361.3px"></div>
<svg class="a" style="left:884px;top:358.8px" width="24" height="22" viewBox="0 0 24 22"><path d="M4,13.5 Q4.5,10 8,9.5 L12,9.5 L14,5 Q15.5,4.5 15.5,6.5 L14.8,9.6 L22,10 Q23,11 22,11.8 L16.5,12.3 Q16.5,16.5 12,16.5 L7,16.5 Q4,16.5 4,13.5 Z" fill="#f0c0a8"/></svg>
<div class="t" style="left:922px;top:362.3px">Kolbermoor Destination 6</div>
<div class="t" style="left:1147px;top:362.3px">07:59:21</div>
<div class="t" style="left:1272px;top:362.3px">07:59:21</div>
<div class="sep" style="top:381.8px"></div>
<div class="cb" style="top:384.4px"></div>
<svg class="a" style="left:884px;top:381.9px" width="24" height="22" viewBox="0 0 24 22"><circle cx="16.5" cy="4.3" r="2.3" fill="#c85a60"/><path d="M13.5,8 Q16.5,6.5 19.5,8 L19.5,18 L14,18 Z" fill="#a83444"/><circle cx="10" cy="4.8" r="2.5" fill="#f0c098"/><path d="M5.5,9 Q10,7 14.5,9 L14.5,19.5 L5.5,19.5 Z" fill="#2a7ed0"/><path d="M6,19.5 H14" stroke="#c8e0f0" stroke-width="1"/></svg>
<div class="t" style="left:922px;top:385.4px">Kolbermoor Platform 1</div>
<div class="t" style="left:1147px;top:385.4px">08:00:44</div>
<div class="t" style="left:1272px;top:385.4px">08:01:19</div>
<div class="sep" style="top:404.9px"></div>
<div class="cb" style="top:407.5px"></div>
<svg class="a" style="left:884px;top:405.0px" width="24" height="22" viewBox="0 0 24 22"><circle cx="16.5" cy="4.3" r="2.3" fill="#c85a60"/><path d="M13.5,8 Q16.5,6.5 19.5,8 L19.5,18 L14,18 Z" fill="#a83444"/><circle cx="10" cy="4.8" r="2.5" fill="#f0c098"/><path d="M5.5,9 Q10,7 14.5,9 L14.5,19.5 L5.5,19.5 Z" fill="#2a7ed0"/><path d="M6,19.5 H14" stroke="#c8e0f0" stroke-width="1"/></svg>
<div class="t" style="left:922px;top:408.5px">Rosenheim Platform 6</div>
<div class="t" style="left:1147px;top:408.5px">08:04:17</div>
<div class="t" style="left:1272px;top:408.5px">08:04:52</div>
<div class="sep" style="top:428.0px"></div>
<div class="cb" style="top:430.6px"></div>
<svg class="a" style="left:884px;top:428.1px" width="24" height="22" viewBox="0 0 24 22"><rect x="12" y="3" width="9" height="15" fill="#2a98c0"/><path d="M3,8.5 L9,8.5 L9,5 L15,10.5 L9,16 L9,12.5 L3,12.5 Z" fill="#f0a830"/></svg>
<div class="t" style="left:922px;top:431.6px">Rosenheim Platform 6</div>
<div class="t" style="left:1147px;top:431.6px">08:04:52</div>
<div class="t" style="left:1272px;top:431.6px">08:04:52</div>
<!-- bottom panel -->
<div class="a" style="left:1439px;top:829px;width:7px;height:16px;background:#666a7c"></div>
<div class="a" style="left:1446px;top:829px;width:33px;height:16px;background:#3a3936"></div>
<div class="a" style="left:848px;top:829px;width:17px;height:15px;background:#5a5e70"></div>
<div class="a" style="left:848px;top:844px;width:631px;height:100px;background:linear-gradient(#2a313c 0,#262d37 55%,#343d4a 58%,#3a4350 100%)"></div>
<div class="a" style="left:1307px;top:857px;width:154px;height:71px;border:2px solid #636b7b;background:linear-gradient(#434a55 0,#464d58 60%,#4e5562 100%)"></div>
<div class="t" style="left:1368px;top:882px;font-size:22px;line-height:24px;color:#f4f4f4">OK</div>
</body></html>
